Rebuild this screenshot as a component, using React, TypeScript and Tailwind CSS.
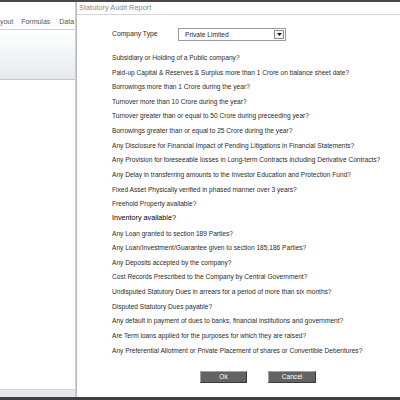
import React from "react";

const questions: { t: string; strong?: boolean }[] = [
  { t: "Subsidiary or Holding of a Public company?" },
  { t: "Paid-up Capital & Reserves & Surplus more than 1 Crore on balance sheet date?" },
  { t: "Borrowings more than 1 Crore during the year?" },
  { t: "Turnover more than 10 Crore during the year?" },
  { t: "Turnover greater than or equal to 50 Crore during preceeding year?" },
  { t: "Borrowings greater than or equal to 25 Crore during the year?" },
  { t: "Any Disclosure for Financial Impact of Pending Litigations in Financial Statements?" },
  { t: "Any Provision for foreseeable losses in Long-term Contracts including Derivative Contracts?" },
  { t: "Any Delay in transferring amounts to the Investor Education and Protection Fund?" },
  { t: "Fixed Asset Physically verified in phased manner over 3 years?" },
  { t: "Freehold Property available?" },
  { t: "Inventory available?", strong: true },
  { t: "Any Loan granted to section 189 Parties?" },
  { t: "Any Loan/Investment/Guarantee given to section 185,186 Parties?" },
  { t: "Any Deposits accepted by the company?" },
  { t: "Cost Records Prescribed to the Company by Central Government?" },
  { t: "Undisputed Statutory Dues in arrears for a period of more than six months?" },
  { t: "Disputed Statutory Dues payable?" },
  { t: "Any default in payment of dues to banks, financial institutions and government?" },
  { t: "Are Term loans applied for the purposes for which they are raised?" },
  { t: "Any Preferential Allotment or Private Placement of shares or Convertible Debentures?" },
];

export default function App() {
  return (
    <div
      className="w-[400px] h-[400px] overflow-hidden flex flex-col bg-white"
      style={{ fontFamily: '"Liberation Sans", Arial, sans-serif' }}
    >
      <div className="h-[2px] bg-[#4a4a4a]" />
      <div className="flex flex-1 min-h-0">
        {/* Excel background */}
        <div className="w-[76px] flex flex-col border-r border-[#c9ccd0]">
          <div className="h-[28px] flex items-end pb-[2px] border-b border-[#cfd2d6] bg-white text-[7px] text-[#555] whitespace-nowrap overflow-hidden">
            <span className="ml-[-4px]">ayout</span>
            <span className="ml-[8px]">Formulas</span>
            <span className="ml-[9px]">Data</span>
          </div>
          <div className="h-[50px] bg-gradient-to-b from-white to-[#e6e9ee] border-b border-[#c3c7cc]" />
          <div className="flex-1 bg-white" />
          <div className="h-[8px] bg-[#e3e6ea] border-t border-[#d5d8dc]" />
        </div>
        {/* Dialog */}
        <div className="flex-1 flex flex-col border-l border-[#b8bcc1] bg-white">
          <div className="h-[13px] border-b border-[#d6d6d6] flex items-center pl-[2px] text-[7.4px] text-[#8a8a8a] whitespace-nowrap">
            Statutory Audit Report
          </div>
          <div className="pl-[35px] pt-[13px] flex flex-col text-[#2b2b2b] text-[6.6px] whitespace-nowrap">
            <div className="flex items-center h-[13px]">
              <span className="w-[66px] text-[6.8px]">Company Type</span>
              <div className="w-[108px] h-[13px] border border-[#9a9a9a] flex items-center justify-between pl-[6px] pr-[1px]">
                <span>Private Limited</span>
                <div className="w-[10px] h-[9px] border border-[#8d8d8d] bg-[#f4f4f4] flex items-center justify-center">
                  <svg width="5" height="3" viewBox="0 0 5 3">
                    <polygon points="0,0 5,0 2.5,3" fill="#111" />
                  </svg>
                </div>
              </div>
            </div>
            <div className="flex flex-col mt-[9.5px]">
              {questions.map((q, i) => (
                <div
                  key={i}
                  className={
                    q.strong
                      ? "h-[14.65px] flex items-center text-[7.2px] text-black"
                      : "h-[14.65px] flex items-center"
                  }
                >
                  {q.t}
                </div>
              ))}
            </div>
            <div className="flex mt-[13px] ml-[88px] gap-[21px]">
              <button className="w-[47px] h-[12px] bg-[#636363] border border-t-[#a0a0a0] border-l-[#a0a0a0] border-r-[#3a3a3a] border-b-[#3a3a3a] text-white text-[6.6px] flex items-center justify-center">
                Ok
              </button>
              <button className="w-[48px] h-[12px] bg-[#636363] border border-t-[#a0a0a0] border-l-[#a0a0a0] border-r-[#3a3a3a] border-b-[#3a3a3a] text-white text-[6.6px] flex items-center justify-center">
                Cancel
              </button>
            </div>
          </div>
        </div>
      </div>
      <div className="h-[3px] bg-[#3f3f3f]" />
    </div>
  );
}
